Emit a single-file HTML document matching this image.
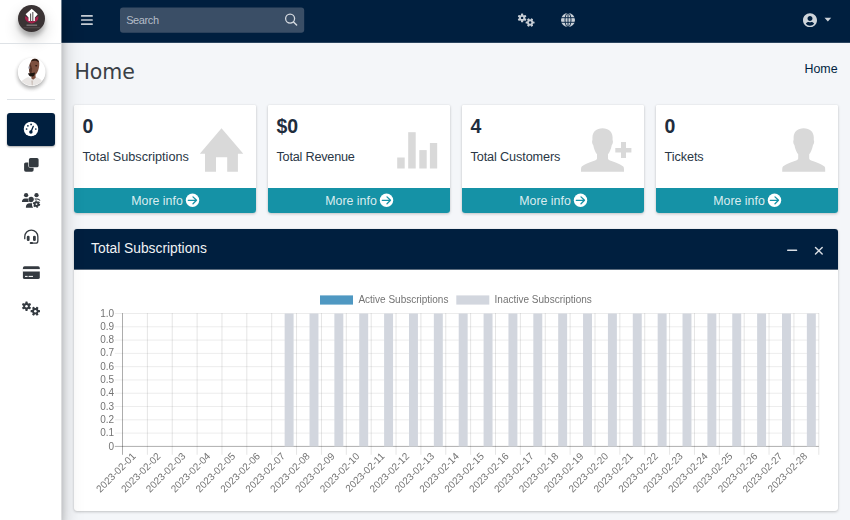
<!DOCTYPE html>
<html lang="en">
<head>
<meta charset="utf-8">
<title>Home</title>
<style>
*{box-sizing:border-box}
html,body{margin:0;padding:0}
body{width:850px;height:520px;overflow:hidden;background:#f4f6f9;font-family:"Liberation Sans",sans-serif;color:#1f2d3d;position:relative}
.abs{position:absolute}
.navbar{position:absolute;left:61px;top:0;width:789px;height:43px;background:#001f3f;border-bottom:1px solid #2b4560}
.sidebar{position:absolute;left:0;top:0;width:61.25px;height:520px;background:#fff;box-shadow:0 10px 21px rgba(0,0,0,.25),0 7px 8px rgba(0,0,0,.22);z-index:5}
.brandline{position:absolute;left:0;top:43px;width:61.25px;height:1px;background:#dee2e6}
.logo{position:absolute;left:17.5px;top:4.900px;width:27.200px;height:27.200px;border-radius:50%;background:#3a3334;box-shadow:0 7.500px 15px rgba(0,0,0,.19),0 4.500px 4.500px rgba(0,0,0,.23)}
.avatar{position:absolute;left:17.5px;top:58px;width:27.5px;height:27.5px;border-radius:50%;background:#fff;box-shadow:0 2.250px 4.500px rgba(0,0,0,.16),0 2.250px 4.500px rgba(0,0,0,.23)}
.divider{position:absolute;left:7px;top:99px;width:48px;height:1px;background:#dee2e6}
.active{position:absolute;left:7px;top:113px;width:48px;height:33px;border-radius:3px;background:#001f3f;box-shadow:0 1px 2px rgba(0,0,0,.12),0 1px 2px rgba(0,0,0,.24)}
.sicon{position:absolute}
.search{position:absolute;left:59px;top:7px;width:184px;height:26px}
.search span{position:absolute;left:6.2px;top:5.5px;font-size:11px;line-height:14px;color:#b4bcc6;letter-spacing:-0.4px}
h1{position:absolute;left:74.4px;top:58.6px;margin:0;font-weight:400;font-size:20.5px;line-height:26px;font-family:"DejaVu Sans","Liberation Sans",sans-serif;color:#3a4046}
.crumb{position:absolute;left:804.5px;top:61px;font-size:12.4px;line-height:16px;color:#001f3f}
.sbox{position:absolute;top:105px;width:182px;height:108px;background:#fff;border-radius:1px 1px 3px 3px;box-shadow:0 0 1px rgba(0,0,0,.125),0 1px 3px rgba(0,0,0,.2);overflow:visible}
.sbox .num{position:absolute;left:8.5px;top:9px;font-weight:700;font-size:19.5px;line-height:24px;color:#1f2d3d}
.sbox .lab{position:absolute;left:8.5px;top:43.5px;font-size:12.68px;line-height:16px;white-space:nowrap;color:#2a3746}
.sbox .bi{position:absolute}
.sbox .foot{position:absolute;left:0;top:83px;width:182px;height:25px;background:#1592a6;border-radius:0 0 3px 3px;color:rgba(255,255,255,.85);font-size:12.4px;line-height:16px}
.sbox .mi{position:absolute;left:57.2px;top:4.500px;white-space:nowrap}
.sbox .arr{position:absolute;left:111px;top:5px;width:15px;height:15px}
.ccard{position:absolute;left:74px;top:229px;width:764px;height:282px;background:#fff;border-radius:3px;box-shadow:0 0 1px rgba(0,0,0,.125),0 1px 3px rgba(0,0,0,.2)}
.chead{position:absolute;left:0;top:0;width:764px;height:41px;background:#001f3f;border-radius:3px 3px 0 0;border-bottom:1px solid #5b6b7d}
.ctitle{position:absolute;left:17.1px;top:10.6px;font-size:13.8px;line-height:18px;color:#f1f3f5;white-space:nowrap}
</style>
</head>
<body>
<div class="navbar">
  <svg class="abs" style="left:19px;top:14px" width="14" height="12" viewBox="80 14 14 12"><g fill="#c6cdd5"><rect x="81" y="15.050" width="11.800" height="1.700" rx="0.500"/><rect x="81" y="19.150" width="11.800" height="1.700" rx="0.500"/><rect x="81" y="23.200" width="11.800" height="1.700" rx="0.500"/></g></svg>
  <svg class="abs" style="left:55px;top:4px" width="194" height="34" viewBox="116 4 194 34"><rect x="120" y="7.4" width="184.2" height="25.4" rx="3" fill="#3a4e66"/><circle cx="290.1" cy="18.6" r="4.5" fill="none" stroke="#d3d8de" stroke-width="1.3"/><line x1="293.5" y1="22" x2="296.6" y2="25" stroke="#d3d8de" stroke-width="1.5" stroke-linecap="round"/></svg>
  <div class="search"><span>Search</span></div>
  <!-- cogs -->
  <svg class="abs" style="left:455px;top:11px" width="22" height="18" viewBox="516 11 22 18"><g transform="translate(522.1,17.9)"><g fill="#c6cdd5"><circle r="3.0"/><rect x="-1.10" y="-4.45" width="2.20" height="3.45" rx="0.6" transform="rotate(0)"/><rect x="-1.10" y="-4.45" width="2.20" height="3.45" rx="0.6" transform="rotate(60)"/><rect x="-1.10" y="-4.45" width="2.20" height="3.45" rx="0.6" transform="rotate(120)"/><rect x="-1.10" y="-4.45" width="2.20" height="3.45" rx="0.6" transform="rotate(180)"/><rect x="-1.10" y="-4.45" width="2.20" height="3.45" rx="0.6" transform="rotate(240)"/><rect x="-1.10" y="-4.45" width="2.20" height="3.45" rx="0.6" transform="rotate(300)"/></g><circle r="1.2" fill="#001f3f"/></g><g transform="translate(530.1,22.5)"><g fill="#c6cdd5"><circle r="3.0"/><rect x="-1.10" y="-4.45" width="2.20" height="3.45" rx="0.6" transform="rotate(30)"/><rect x="-1.10" y="-4.45" width="2.20" height="3.45" rx="0.6" transform="rotate(90)"/><rect x="-1.10" y="-4.45" width="2.20" height="3.45" rx="0.6" transform="rotate(150)"/><rect x="-1.10" y="-4.45" width="2.20" height="3.45" rx="0.6" transform="rotate(210)"/><rect x="-1.10" y="-4.45" width="2.20" height="3.45" rx="0.6" transform="rotate(270)"/><rect x="-1.10" y="-4.45" width="2.20" height="3.45" rx="0.6" transform="rotate(330)"/></g><circle r="1.2" fill="#001f3f"/></g></svg>
  <!-- globe -->
  <svg class="abs" style="left:500px;top:12.900px" width="14" height="14" viewBox="0 0 14 14"><circle cx="7" cy="7" r="7" fill="#c9d0d8"/><g fill="none" stroke="#001f3f" stroke-width="0.900"><ellipse cx="7" cy="7" rx="3" ry="7"/><line x1="7" y1="0" x2="7" y2="14"/><line x1="0" y1="4.700" x2="14" y2="4.700"/><line x1="0" y1="9.300" x2="14" y2="9.300"/></g></svg>
  <!-- user circle -->
  <svg class="abs" style="left:742px;top:13px" width="14" height="14.450" viewBox="0 0 496 512"><path fill="#ced4da" d="M248 8C111 8 0 119 0 256s111 248 248 248 248-111 248-248S385 8 248 8zm0 96c48.600 0 88 39.400 88 88s-39.400 88-88 88-88-39.400-88-88 39.400-88 88-88zm0 344c-58.700 0-111.300-26.600-146.500-68.200 18.800-35.400 55.600-59.800 98.500-59.800 2.400 0 4.800.4 7.100 1.100 13 4.200 26.600 6.900 40.900 6.900 14.300 0 28-2.700 40.900-6.900 2.300-.7 4.700-1.100 7.100-1.100 42.900 0 79.700 24.400 98.500 59.800C359.300 421.400 306.700 448 248 448z"/></svg>
  <svg class="abs" style="left:763px;top:17px" width="9" height="6" viewBox="0 0 9 6"><path fill="#ced4da" d="M0.500 0.700h6.700L3.850 4.600z"/></svg>
</div>

<h1>Home</h1>
<div class="crumb">Home</div>

<div class="sbox" style="left:74px">
  <div class="num">0</div>
  <div class="lab" style="letter-spacing:0px">Total Subscriptions</div>
  <svg class="bi" style="left:125px;top:23px" width="46" height="45" viewBox="199 128 46 45"><path fill="#d9d9d9" d="M221.5 128.3 L243.3 153.7 L237.9 153.7 L237.9 171.7 L227.2 171.7 L227.2 157.3 L216 157.3 L216 171.7 L205 171.7 L205 153.7 L199.8 153.7 Z"/></svg>
  <div class="foot"><span class="mi">More info</span><svg class="arr" viewBox="-7.5 -7.3 15 15"><circle r="6.700" fill="#fff"/><path d="M-4.200 0H3.600M0.500-3.400L4 0L0.500 3.400" fill="none" stroke="#1592a6" stroke-width="1.3" stroke-linecap="round" stroke-linejoin="round"/></svg></div>
</div>
<div class="sbox" style="left:268px">
  <div class="num">$0</div>
  <div class="lab" style="letter-spacing:-0.22px">Total Revenue</div>
  <svg class="bi" style="left:129px;top:27px" width="41" height="38" viewBox="397 132 41 38"><g fill="#d9d9d9"><rect x="397.2" y="157.5" width="7.5" height="11"/><rect x="408.2" y="132.2" width="7.5" height="36.3"/><rect x="419.3" y="150.1" width="7.4" height="18.4"/><rect x="429.9" y="143" width="7.3" height="25.5"/></g></svg>
  <div class="foot"><span class="mi">More info</span><svg class="arr" viewBox="-7.5 -7.3 15 15"><circle r="6.700" fill="#fff"/><path d="M-4.200 0H3.600M0.500-3.400L4 0L0.500 3.400" fill="none" stroke="#1592a6" stroke-width="1.3" stroke-linecap="round" stroke-linejoin="round"/></svg></div>
</div>
<div class="sbox" style="left:462px">
  <div class="num">4</div>
  <div class="lab" style="letter-spacing:-0.12px">Total Customers</div>
  <svg class="bi" style="left:118px;top:23px" width="54" height="45" viewBox="580 128 54 45"><g transform="translate(581 128.3)"><path fill="#d9d9d9" d="M21.5 0 C27.5 0 31.6 3.6 31.6 9.2 C31.6 10.6 31.4 11.6 31.9 12.6 C32.1 14.1 31.6 15.6 30.8 16.6 C30 21 28.6 24 27 26 L27 30 C27 31 27.6 31.6 29 32.1 C35 34.1 40 36 42 38 C43 39 43 40 43 43.4 L0 43.4 C0 40 0 39 1 38 C3 36 8 34.1 14 32.1 C15.4 31.6 16 31 16 30 L16 26 C14.4 24 13 21 12.2 16.6 C11.4 15.6 10.9 14.1 11.1 12.6 C11.6 11.6 11.4 10.6 11.4 9.2 C11.4 3.6 15.5 0 21.5 0 Z"/><path fill="#d9d9d9" d="M34.3 19.7h5.700v-6.100h5v6.100h5.400v4.500h-5.400v5.600h-5v-5.600h-5.700z"/></g></svg>
  <div class="foot"><span class="mi">More info</span><svg class="arr" viewBox="-7.5 -7.3 15 15"><circle r="6.700" fill="#fff"/><path d="M-4.200 0H3.600M0.500-3.400L4 0L0.500 3.400" fill="none" stroke="#1592a6" stroke-width="1.3" stroke-linecap="round" stroke-linejoin="round"/></svg></div>
</div>
<div class="sbox" style="left:656px">
  <div class="num">0</div>
  <div class="lab" style="letter-spacing:-0.08px">Tickets</div>
  <svg class="bi" style="left:126px;top:23px" width="45" height="45" viewBox="782 128 45 45"><g transform="translate(782.2 128.3)"><path fill="#d9d9d9" d="M21.5 0 C27.5 0 31.6 3.6 31.6 9.2 C31.6 10.6 31.4 11.6 31.9 12.6 C32.1 14.1 31.6 15.6 30.8 16.6 C30 21 28.6 24 27 26 L27 30 C27 31 27.6 31.6 29 32.1 C35 34.1 40 36 42 38 C43 39 43 40 43 43.4 L0 43.4 C0 40 0 39 1 38 C3 36 8 34.1 14 32.1 C15.4 31.6 16 31 16 30 L16 26 C14.4 24 13 21 12.2 16.6 C11.4 15.6 10.9 14.1 11.1 12.6 C11.6 11.6 11.4 10.6 11.4 9.2 C11.4 3.6 15.5 0 21.5 0 Z"/></g></svg>
  <div class="foot"><span class="mi">More info</span><svg class="arr" viewBox="-7.5 -7.3 15 15"><circle r="6.700" fill="#fff"/><path d="M-4.200 0H3.600M0.500-3.400L4 0L0.500 3.400" fill="none" stroke="#1592a6" stroke-width="1.3" stroke-linecap="round" stroke-linejoin="round"/></svg></div>
</div>

<div class="ccard">
  <div class="chead">
    <div class="ctitle">Total Subscriptions</div>
    <svg class="abs" style="left:712px;top:15px" width="40" height="12" viewBox="786 244 40 12"><rect x="787.1" y="249.4" width="10.1" height="1.7" rx="0.6" fill="#d9dee4"/><g stroke="#d9dee4" stroke-width="1.45" stroke-linecap="round"><line x1="815.5" y1="247.5" x2="822.2" y2="254"/><line x1="822.2" y1="247.5" x2="815.5" y2="254"/></g></svg>
  </div>
</div>
<svg class="chart" width="850" height="520" viewBox="0 0 850 520" style="position:absolute;left:0;top:0;will-change:transform" font-family="Liberation Sans, sans-serif" font-size="10" fill="#747474">
<rect x="320" y="295.4" width="33" height="9.2" fill="#4f98c2"/>
<text x="358.4" y="303">Active Subscriptions</text>
<rect x="456.3" y="295.4" width="33" height="9.2" fill="#d2d6de"/>
<text x="494.6" y="303">Inactive Subscriptions</text>
<line x1="114.8" x2="818.8" y1="313.50" y2="313.50" stroke="rgba(0,0,0,0.1)" stroke-width="0.75"/>
<line x1="114.8" x2="818.8" y1="326.79" y2="326.79" stroke="rgba(0,0,0,0.1)" stroke-width="0.75"/>
<line x1="114.8" x2="818.8" y1="340.08" y2="340.08" stroke="rgba(0,0,0,0.1)" stroke-width="0.75"/>
<line x1="114.8" x2="818.8" y1="353.37" y2="353.37" stroke="rgba(0,0,0,0.1)" stroke-width="0.75"/>
<line x1="114.8" x2="818.8" y1="366.66" y2="366.66" stroke="rgba(0,0,0,0.1)" stroke-width="0.75"/>
<line x1="114.8" x2="818.8" y1="379.95" y2="379.95" stroke="rgba(0,0,0,0.1)" stroke-width="0.75"/>
<line x1="114.8" x2="818.8" y1="393.24" y2="393.24" stroke="rgba(0,0,0,0.1)" stroke-width="0.75"/>
<line x1="114.8" x2="818.8" y1="406.53" y2="406.53" stroke="rgba(0,0,0,0.1)" stroke-width="0.75"/>
<line x1="114.8" x2="818.8" y1="419.82" y2="419.82" stroke="rgba(0,0,0,0.1)" stroke-width="0.75"/>
<line x1="114.8" x2="818.8" y1="433.11" y2="433.11" stroke="rgba(0,0,0,0.1)" stroke-width="0.75"/>
<line x1="114.8" x2="818.8" y1="446.40" y2="446.40" stroke="rgba(0,0,0,0.32)" stroke-width="1"/>
<line x1="122.50" x2="122.50" y1="313.1" y2="454.80" stroke="rgba(0,0,0,0.32)" stroke-width="1"/>
<line x1="147.37" x2="147.37" y1="313.1" y2="454.80" stroke="rgba(0,0,0,0.105)" stroke-width="1"/>
<line x1="172.24" x2="172.24" y1="313.1" y2="454.80" stroke="rgba(0,0,0,0.105)" stroke-width="1"/>
<line x1="197.10" x2="197.10" y1="313.1" y2="454.80" stroke="rgba(0,0,0,0.105)" stroke-width="1"/>
<line x1="221.97" x2="221.97" y1="313.1" y2="454.80" stroke="rgba(0,0,0,0.105)" stroke-width="1"/>
<line x1="246.84" x2="246.84" y1="313.1" y2="454.80" stroke="rgba(0,0,0,0.105)" stroke-width="1"/>
<line x1="271.71" x2="271.71" y1="313.1" y2="454.80" stroke="rgba(0,0,0,0.105)" stroke-width="1"/>
<line x1="296.57" x2="296.57" y1="313.1" y2="454.80" stroke="rgba(0,0,0,0.105)" stroke-width="1"/>
<line x1="321.44" x2="321.44" y1="313.1" y2="454.80" stroke="rgba(0,0,0,0.105)" stroke-width="1"/>
<line x1="346.31" x2="346.31" y1="313.1" y2="454.80" stroke="rgba(0,0,0,0.105)" stroke-width="1"/>
<line x1="371.18" x2="371.18" y1="313.1" y2="454.80" stroke="rgba(0,0,0,0.105)" stroke-width="1"/>
<line x1="396.05" x2="396.05" y1="313.1" y2="454.80" stroke="rgba(0,0,0,0.105)" stroke-width="1"/>
<line x1="420.91" x2="420.91" y1="313.1" y2="454.80" stroke="rgba(0,0,0,0.105)" stroke-width="1"/>
<line x1="445.78" x2="445.78" y1="313.1" y2="454.80" stroke="rgba(0,0,0,0.105)" stroke-width="1"/>
<line x1="470.65" x2="470.65" y1="313.1" y2="454.80" stroke="rgba(0,0,0,0.105)" stroke-width="1"/>
<line x1="495.52" x2="495.52" y1="313.1" y2="454.80" stroke="rgba(0,0,0,0.105)" stroke-width="1"/>
<line x1="520.39" x2="520.39" y1="313.1" y2="454.80" stroke="rgba(0,0,0,0.105)" stroke-width="1"/>
<line x1="545.25" x2="545.25" y1="313.1" y2="454.80" stroke="rgba(0,0,0,0.105)" stroke-width="1"/>
<line x1="570.12" x2="570.12" y1="313.1" y2="454.80" stroke="rgba(0,0,0,0.105)" stroke-width="1"/>
<line x1="594.99" x2="594.99" y1="313.1" y2="454.80" stroke="rgba(0,0,0,0.105)" stroke-width="1"/>
<line x1="619.86" x2="619.86" y1="313.1" y2="454.80" stroke="rgba(0,0,0,0.105)" stroke-width="1"/>
<line x1="644.72" x2="644.72" y1="313.1" y2="454.80" stroke="rgba(0,0,0,0.105)" stroke-width="1"/>
<line x1="669.59" x2="669.59" y1="313.1" y2="454.80" stroke="rgba(0,0,0,0.105)" stroke-width="1"/>
<line x1="694.46" x2="694.46" y1="313.1" y2="454.80" stroke="rgba(0,0,0,0.105)" stroke-width="1"/>
<line x1="719.33" x2="719.33" y1="313.1" y2="454.80" stroke="rgba(0,0,0,0.105)" stroke-width="1"/>
<line x1="744.20" x2="744.20" y1="313.1" y2="454.80" stroke="rgba(0,0,0,0.105)" stroke-width="1"/>
<line x1="769.06" x2="769.06" y1="313.1" y2="454.80" stroke="rgba(0,0,0,0.105)" stroke-width="1"/>
<line x1="793.93" x2="793.93" y1="313.1" y2="454.80" stroke="rgba(0,0,0,0.105)" stroke-width="1"/>
<line x1="818.80" x2="818.80" y1="313.1" y2="454.80" stroke="rgba(0,0,0,0.105)" stroke-width="1"/>
<rect x="284.64" y="313.5" width="8.95" height="132.90" fill="#d2d6de"/>
<rect x="309.51" y="313.5" width="8.95" height="132.90" fill="#d2d6de"/>
<rect x="334.37" y="313.5" width="8.95" height="132.90" fill="#d2d6de"/>
<rect x="359.24" y="313.5" width="8.95" height="132.90" fill="#d2d6de"/>
<rect x="384.11" y="313.5" width="8.95" height="132.90" fill="#d2d6de"/>
<rect x="408.98" y="313.5" width="8.95" height="132.90" fill="#d2d6de"/>
<rect x="433.85" y="313.5" width="8.95" height="132.90" fill="#d2d6de"/>
<rect x="458.71" y="313.5" width="8.95" height="132.90" fill="#d2d6de"/>
<rect x="483.58" y="313.5" width="8.95" height="132.90" fill="#d2d6de"/>
<rect x="508.45" y="313.5" width="8.95" height="132.90" fill="#d2d6de"/>
<rect x="533.32" y="313.5" width="8.95" height="132.90" fill="#d2d6de"/>
<rect x="558.18" y="313.5" width="8.95" height="132.90" fill="#d2d6de"/>
<rect x="583.05" y="313.5" width="8.95" height="132.90" fill="#d2d6de"/>
<rect x="607.92" y="313.5" width="8.95" height="132.90" fill="#d2d6de"/>
<rect x="632.79" y="313.5" width="8.95" height="132.90" fill="#d2d6de"/>
<rect x="657.66" y="313.5" width="8.95" height="132.90" fill="#d2d6de"/>
<rect x="682.52" y="313.5" width="8.95" height="132.90" fill="#d2d6de"/>
<rect x="707.39" y="313.5" width="8.95" height="132.90" fill="#d2d6de"/>
<rect x="732.26" y="313.5" width="8.95" height="132.90" fill="#d2d6de"/>
<rect x="757.13" y="313.5" width="8.95" height="132.90" fill="#d2d6de"/>
<rect x="782.00" y="313.5" width="8.95" height="132.90" fill="#d2d6de"/>
<rect x="806.86" y="313.5" width="8.95" height="132.90" fill="#d2d6de"/>
<text x="114.1" y="316.60" text-anchor="end">1.0</text>
<text x="114.1" y="329.89" text-anchor="end">0.9</text>
<text x="114.1" y="343.18" text-anchor="end">0.8</text>
<text x="114.1" y="356.47" text-anchor="end">0.7</text>
<text x="114.1" y="369.76" text-anchor="end">0.6</text>
<text x="114.1" y="383.05" text-anchor="end">0.5</text>
<text x="114.1" y="396.34" text-anchor="end">0.4</text>
<text x="114.1" y="409.63" text-anchor="end">0.3</text>
<text x="114.1" y="422.92" text-anchor="end">0.2</text>
<text x="114.1" y="436.21" text-anchor="end">0.1</text>
<text x="114.1" y="449.50" text-anchor="end">0</text>
<text transform="translate(134.03,454.40) rotate(-45)" text-anchor="end" y="3.4">2023-02-01</text>
<text transform="translate(158.90,454.40) rotate(-45)" text-anchor="end" y="3.4">2023-02-02</text>
<text transform="translate(183.77,454.40) rotate(-45)" text-anchor="end" y="3.4">2023-02-03</text>
<text transform="translate(208.64,454.40) rotate(-45)" text-anchor="end" y="3.4">2023-02-04</text>
<text transform="translate(233.51,454.40) rotate(-45)" text-anchor="end" y="3.4">2023-02-05</text>
<text transform="translate(258.37,454.40) rotate(-45)" text-anchor="end" y="3.4">2023-02-06</text>
<text transform="translate(283.24,454.40) rotate(-45)" text-anchor="end" y="3.4">2023-02-07</text>
<text transform="translate(308.11,454.40) rotate(-45)" text-anchor="end" y="3.4">2023-02-08</text>
<text transform="translate(332.98,454.40) rotate(-45)" text-anchor="end" y="3.4">2023-02-09</text>
<text transform="translate(357.84,454.40) rotate(-45)" text-anchor="end" y="3.4">2023-02-10</text>
<text transform="translate(382.71,454.40) rotate(-45)" text-anchor="end" y="3.4">2023-02-11</text>
<text transform="translate(407.58,454.40) rotate(-45)" text-anchor="end" y="3.4">2023-02-12</text>
<text transform="translate(432.45,454.40) rotate(-45)" text-anchor="end" y="3.4">2023-02-13</text>
<text transform="translate(457.32,454.40) rotate(-45)" text-anchor="end" y="3.4">2023-02-14</text>
<text transform="translate(482.18,454.40) rotate(-45)" text-anchor="end" y="3.4">2023-02-15</text>
<text transform="translate(507.05,454.40) rotate(-45)" text-anchor="end" y="3.4">2023-02-16</text>
<text transform="translate(531.92,454.40) rotate(-45)" text-anchor="end" y="3.4">2023-02-17</text>
<text transform="translate(556.79,454.40) rotate(-45)" text-anchor="end" y="3.4">2023-02-18</text>
<text transform="translate(581.66,454.40) rotate(-45)" text-anchor="end" y="3.4">2023-02-19</text>
<text transform="translate(606.52,454.40) rotate(-45)" text-anchor="end" y="3.4">2023-02-20</text>
<text transform="translate(631.39,454.40) rotate(-45)" text-anchor="end" y="3.4">2023-02-21</text>
<text transform="translate(656.26,454.40) rotate(-45)" text-anchor="end" y="3.4">2023-02-22</text>
<text transform="translate(681.13,454.40) rotate(-45)" text-anchor="end" y="3.4">2023-02-23</text>
<text transform="translate(705.99,454.40) rotate(-45)" text-anchor="end" y="3.4">2023-02-24</text>
<text transform="translate(730.86,454.40) rotate(-45)" text-anchor="end" y="3.4">2023-02-25</text>
<text transform="translate(755.73,454.40) rotate(-45)" text-anchor="end" y="3.4">2023-02-26</text>
<text transform="translate(780.60,454.40) rotate(-45)" text-anchor="end" y="3.4">2023-02-27</text>
<text transform="translate(805.47,454.40) rotate(-45)" text-anchor="end" y="3.4">2023-02-28</text>
</svg>

<div class="sidebar">
  <div class="logo">
    <svg width="28" height="28" viewBox="17.5 4.9 28 28"><defs><filter id="lb" x="-20%" y="-20%" width="140%" height="140%"><feGaussianBlur stdDeviation="0.35"/></filter></defs><g filter="url(#lb)"><path fill="#a5214c" d="M24.5 16.200c1.800.3 3.200 1.500 3.900 3.200l2.800 2.200 2.800-2.200c.7-1.700 2.100-2.900 3.900-3.200.3 2.700-.9 5-3.300 6-1 .7-2.200 1.100-3.400 1.100s-2.400-.4-3.400-1.100c-2.400-1-3.600-3.300-3.300-6z"/><path fill="#fff" d="M31.200 8.700l6.100 5.400-2.900 3.400v3.300h-6.400v-3.300l-2.900-3.400z"/><path fill="#3a3334" d="M29.700 13.300h.9v7.600h-.9zM31.900 12h.9v8.900h-.9z"/><rect x="26" y="24.500" width="10.600" height="1.100" fill="#8d8889"/><rect x="23" y="27.300" width="16.500" height="0.800" fill="#5a5455"/></g></svg>
  </div>
  <div class="brandline"></div>
  <div style="position:absolute;left:61px;top:0;width:1px;height:520px;background:rgba(255,255,255,.42)"></div>
  <div class="avatar">
    <svg width="28" height="28" viewBox="17.5 58 28 28"><defs><filter id="bl" x="-20%" y="-20%" width="140%" height="140%"><feGaussianBlur stdDeviation="0.6"/></filter><clipPath id="cp"><circle cx="31.250" cy="71.750" r="13.750"/></clipPath></defs><g clip-path="url(#cp)"><rect x="17" y="57" width="29" height="30" fill="#fff"/><g filter="url(#bl)"><path fill="#e9e6e4" d="M19 86.500c.5-4.500 3.500-7.500 9-9.500l4 2.500 3.500-2.500c4 1 7 4 8 9.500z"/><path fill="#cfc5bf" d="M30.600 80.500l.8 6h.8l.4-6z"/><path fill="#7b4f3e" d="M31.300 75.500l3.600-1 .3 3.200-2.600 2.100-1.900-1.600z"/><path fill="#7d5141" d="M30.300 61.500c1-2.700 3.800-3.500 6-2.600 2.100.9 2.800 3.200 2.400 6.700-.3 3.500-1.400 6.700-3.200 8.600-1.600 1.500-3.800 1.500-5.200.5-1.600-1.500-2.100-4.100-1.600-7.200.2-2.500.8-4.700 1.600-6z"/><path fill="#4a2c22" d="M29.700 63c-.8 2-1.200 5-.8 8 .3 1.500 1 3 2 3.800l.8-6z" opacity=".8"/><path fill="#2b1a14" d="M30.500 61.500c1-2.500 3.500-3.300 5.500-2.500 1.500.6 2.200 1.800 2.400 3.500-1.500-1.500-3-2-4.500-1.800-1.500 0-2.600.3-3.400.8z"/><ellipse cx="35.700" cy="65.800" rx="1" ry="0.700" fill="#2a1711"/><path fill="#1c1210" d="M27.900 73c1.500.5 4 .3 6.400-.5.300 1.500-.3 3-1.500 3.800-1.500.6-3 .3-4-.6-.8-.8-1.100-1.800-.9-2.700z"/><ellipse cx="28.700" cy="67.500" rx="0.900" ry="1.500" fill="#9d9aa6" opacity=".8"/></g></g></svg>
  </div>
  <div class="divider"></div>
  <div class="active">
    <svg class="abs" style="left:16px;top:8px" width="16" height="17" viewBox="23 121 16 17"><circle cx="31" cy="129" r="7.250" fill="#fff"/><g fill="#001f3f"><circle cx="26.6" cy="129" r="0.85"/><circle cx="27.9" cy="125.8" r="0.85"/><circle cx="31.1" cy="124.4" r="0.85"/><circle cx="35.8" cy="129" r="0.85"/><circle cx="30.9" cy="131.9" r="1.750"/></g><line x1="30.9" y1="131.9" x2="33.3" y2="126.300" stroke="#001f3f" stroke-width="1.300" stroke-linecap="round"/></svg>
  </div>
  <!-- clone -->
  <svg class="sicon" style="left:23px;top:157px" width="17" height="16" viewBox="23 157 17 16"><rect x="24.1" y="162.4" width="9.5" height="9.4" rx="1.7" fill="#343a40"/><rect x="28.3" y="157.6" width="10.8" height="10.2" rx="2" fill="#fff"/><rect x="28.9" y="158.1" width="9.7" height="9.2" rx="1.6" fill="#343a40"/></svg>
  <!-- users-cog -->
  <svg class="sicon" style="left:21px;top:192px" width="20" height="17" viewBox="21 192 20 17"><g fill="#343a40"><circle cx="26.1" cy="195.2" r="2.15"/><circle cx="36.5" cy="195.2" r="2.15"/><path d="M21.9 201.9c0-1.900 1.300-3.400 3-3.400h2c.4 0 .8.100 1.100.2-.2 1.300.2 2.400 1 3.200z"/><path d="M34.400 198.700c.3-.1.700-.2 1.100-.2h2c1.500 0 2.700 1.100 2.900 2.500-1.500-.8-3.400-.9-5-.2-.2-.8-.5-1.500-1-2.100z"/><circle cx="31.1" cy="199.500" r="2.700"/><path d="M25.900 207.800v-.9c0-2 1.600-3.600 3.600-3.600h3.300c-.7 1.500-.6 3.100.3 4.500z"/></g><circle cx="36.500" cy="204.100" r="4.500" fill="#fff"/><circle cx="36.500" cy="204.100" r="1.900" fill="none" stroke="#343a40" stroke-width="1.900"/><circle cx="36.500" cy="204.100" r="3.100" fill="none" stroke="#343a40" stroke-width="1.200" stroke-dasharray="1.620 1.626"/></svg>
  <!-- headset -->
  <svg class="sicon" style="left:22px;top:228px" width="18" height="18" viewBox="22 228 18 18"><path d="M24.75 238.7v-2a6.550 6.550 0 0 1 13.100 0v4.200c0 1.300-1 2.200-2.200 2.200h-3.500" fill="none" stroke="#343a40" stroke-width="1.3" stroke-linecap="round"/><rect x="26.8" y="235.7" width="2.8" height="5.300" rx="1.250" fill="#343a40"/><rect x="33" y="235.7" width="2.8" height="5.300" rx="1.250" fill="#343a40"/><rect x="29.7" y="242" width="3.300" height="2.100" rx="1" fill="#343a40"/></svg>
  <!-- credit card -->
  <svg class="sicon" style="left:22px;top:265px" width="19" height="16" viewBox="22 265 19 16"><rect x="22.9" y="266.3" width="16.9" height="12.8" rx="1.7" fill="#343a40"/><rect x="22.5" y="269.1" width="18" height="2.4" fill="#fff"/><rect x="25" y="275.9" width="2.6" height="1" fill="#fff"/><rect x="28.6" y="275.9" width="4.4" height="1" fill="#fff"/></svg>
  <!-- cogs -->
  <svg class="sicon" style="left:20px;top:300px" width="22" height="18" viewBox="20 300 22 18"><g transform="translate(26.5,306.2)"><g fill="#343a40"><circle r="3.15"/><rect x="-1.15" y="-4.70" width="2.30" height="3.70" rx="0.6" transform="rotate(0)"/><rect x="-1.15" y="-4.70" width="2.30" height="3.70" rx="0.6" transform="rotate(60)"/><rect x="-1.15" y="-4.70" width="2.30" height="3.70" rx="0.6" transform="rotate(120)"/><rect x="-1.15" y="-4.70" width="2.30" height="3.70" rx="0.6" transform="rotate(180)"/><rect x="-1.15" y="-4.70" width="2.30" height="3.70" rx="0.6" transform="rotate(240)"/><rect x="-1.15" y="-4.70" width="2.30" height="3.70" rx="0.6" transform="rotate(300)"/></g><circle r="1.25" fill="#fff"/></g><g transform="translate(35.3,311.2)"><g fill="#343a40"><circle r="3.15"/><rect x="-1.15" y="-4.70" width="2.30" height="3.70" rx="0.6" transform="rotate(30)"/><rect x="-1.15" y="-4.70" width="2.30" height="3.70" rx="0.6" transform="rotate(90)"/><rect x="-1.15" y="-4.70" width="2.30" height="3.70" rx="0.6" transform="rotate(150)"/><rect x="-1.15" y="-4.70" width="2.30" height="3.70" rx="0.6" transform="rotate(210)"/><rect x="-1.15" y="-4.70" width="2.30" height="3.70" rx="0.6" transform="rotate(270)"/><rect x="-1.15" y="-4.70" width="2.30" height="3.70" rx="0.6" transform="rotate(330)"/></g><circle r="1.25" fill="#fff"/></g></svg>
</div>
</body>
</html>
